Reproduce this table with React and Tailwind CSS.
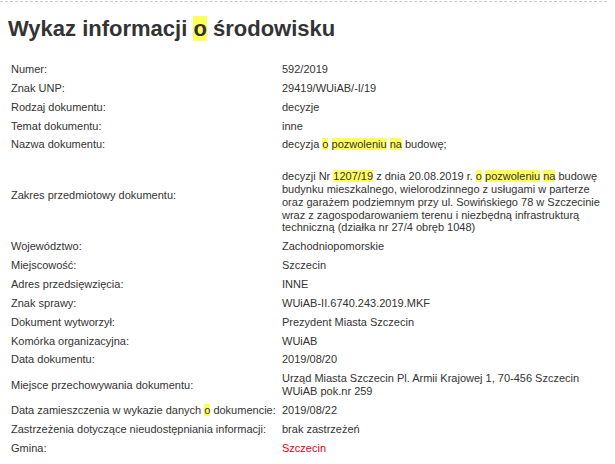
import React from "react";

const H = ({ children }) => <span className="bg-[#ffff5c]">{children}</span>;

const rows = [
  ["Numer:", "592/2019"],
  ["Znak UNP:", "29419/WUiAB/-I/19"],
  ["Rodzaj dokumentu:", "decyzje"],
  ["Temat dokumentu:", "inne"],
  [
    "Nazwa dokumentu:",
    <>
      decyzja <H>o</H> <H>pozwoleniu</H> <H>na</H> budowę;
    </>,
  ],
  [
    "Zakres przedmiotowy dokumentu:",
    <>
      <br />
      decyzji Nr <H>1207/19</H> z dnia 20.08.2019 r. <H>o</H> <H>pozwoleniu</H> <H>na</H> budowę
      <br />
      budynku mieszkalnego, wielorodzinnego z usługami w parterze
      <br />
      oraz garażem podziemnym przy ul. Sowińskiego 78 w Szczecinie
      <br />
      wraz z zagospodarowaniem terenu i niezbędną infrastrukturą
      <br />
      techniczną (działka nr 27/4 obręb 1048)
    </>,
  ],
  ["Województwo:", "Zachodniopomorskie"],
  ["Miejscowość:", "Szczecin"],
  ["Adres przedsięwzięcia:", "INNE"],
  ["Znak sprawy:", "WUiAB-II.6740.243.2019.MKF"],
  ["Dokument wytworzył:", "Prezydent Miasta Szczecin"],
  ["Komórka organizacyjna:", "WUiAB"],
  ["Data dokumentu:", "2019/08/20"],
  [
    "Miejsce przechowywania dokumentu:",
    <>
      Urząd Miasta Szczecin Pl. Armii Krajowej 1, 70-456 Szczecin
      <br />
      WUiAB pok.nr 259
    </>,
  ],
  [
    <>
      Data zamieszczenia w wykazie danych <H>o</H> dokumencie:
    </>,
    "2019/08/22",
  ],
  ["Zastrzeżenia dotyczące nieudostępniania informacji:", "brak zastrzeżeń"],
  ["Gmina:", <span className="text-[#e2001a]">Szczecin</span>],
];

export default function App() {
  return (
    <div
      className="w-[615px] h-[464px] overflow-hidden bg-white text-[#333]"
      style={{ fontFamily: '"Liberation Sans", Arial, Helvetica, sans-serif' }}
    >
      <div className="mt-[1px] w-[607px] border-t border-dashed border-[#c8c8c8]" />
      <h1 className="mt-[14px] px-[8px] text-[22px] leading-[26px] font-bold text-[#333]">
        Wykaz informacji <H>o</H> środowisku
      </h1>
      <div className="mt-[18px] px-[8px] grid grid-cols-[271px_1fr] text-[11px] leading-[12.85px]">
        {rows.map(([label, value], i) => (
          <React.Fragment key={i}>
            <div className="px-[3px] py-[3px] flex items-center whitespace-nowrap">
              <span>{label}</span>
            </div>
            <div className="px-[3px] py-[3px] whitespace-nowrap">{value}</div>
          </React.Fragment>
        ))}
      </div>
    </div>
  );
}
